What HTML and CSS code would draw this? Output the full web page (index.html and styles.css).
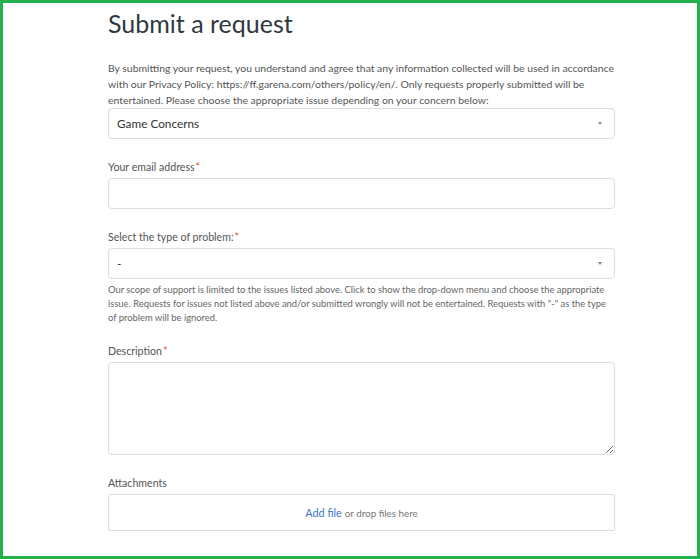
FILE: index.html
```html
<!DOCTYPE html>
<html lang="en">
<head>
    <meta charset="UTF-8">
    <meta name="viewport" content="width=device-width, initial-scale=1.0">
    <title>Submit a request</title>
    <link rel="stylesheet" href="styles.css">
</head>
<body>
    <div class="frame">
        <div class="container">
            <h1 class="page-title">Submit a request</h1>

            <p class="intro">By submitting your request, you understand and agree that any information collected will be used in accordance with our Privacy Policy: https://ff.garena.com/others/policy/en/. Only requests properly submitted will be entertained. Please choose the appropriate issue depending on your concern below:</p>

            <div class="select-field">
                <span>Game Concerns</span>
                <span class="caret"></span>
            </div>

            <form class="request-form">
                <div class="form-group">
                    <label for="email">Your email address<span class="required">*</span></label>
                    <input type="text" id="email" class="input-field">
                </div>

                <div class="form-group">
                    <label>Select the type of problem:<span class="required">*</span></label>
                    <div class="select-field">
                        <span>-</span>
                        <span class="caret"></span>
                    </div>
                    <p class="hint">Our scope of support is limited to the issues listed above. Click to show the drop-down menu and choose the appropriate issue. Requests for issues not listed above and/or submitted wrongly will not be entertained. Requests with "-" as the type of problem will be ignored.</p>
                </div>

                <div class="form-group group-tight">
                    <label for="description">Description<span class="required">*</span></label>
                    <textarea id="description" class="textarea-field"></textarea>
                </div>

                <div class="form-group">
                    <label>Attachments</label>
                    <div class="dropzone">
                        <a href="#" class="add-file">Add file</a> or drop files here
                    </div>
                </div>
            </form>
        </div>
    </div>
</body>
</html>
```

FILE: styles.css
```css
* {
    margin: 0;
    padding: 0;
    box-sizing: border-box;
}

body {
    font-family: 'Lato', 'Open Sans', sans-serif;
    background: white;
    color: #555;
}

.frame {
    height: 559px;
    border: 3px solid #22b14c;
    overflow: hidden;
    padding-left: 105px;
}

.container {
    width: 507px;
}

.page-title {
    font-size: 25px;
    font-weight: 400;
    line-height: 32px;
    color: #2f3941;
    margin-top: 4px;
}

.intro {
    font-size: 10.4px;
    line-height: 16px;
    margin-top: 21px;
    color: #555;
}

.select-field {
    height: 31px;
    border: 1px solid #ddd;
    border-radius: 4px;
    display: flex;
    align-items: center;
    justify-content: space-between;
    padding: 0 12px 0 8px;
    font-size: 11.8px;
    color: #333;
}

.caret {
    width: 0;
    height: 0;
    border-left: 2.5px solid transparent;
    border-right: 2.5px solid transparent;
    border-top: 3px solid #888;
}

.form-group {
    margin-top: 21px;
}

.group-tight {
    margin-top: 19px;
}

.form-group label {
    display: block;
    font-size: 10.6px;
    line-height: 14px;
    margin-bottom: 4px;
    color: #555;
}

.required {
    color: #e34f32;
    margin-left: 1px;
}

.input-field {
    display: block;
    width: 100%;
    height: 31px;
    border: 1px solid #ddd;
    border-radius: 4px;
    font-family: inherit;
}

.hint {
    font-size: 9.4px;
    line-height: 14px;
    margin-top: 4px;
    color: #666;
}

.textarea-field {
    display: block;
    width: 100%;
    height: 93px;
    border: 1px solid #ddd;
    border-radius: 4px;
    resize: vertical;
    font-family: inherit;
}

.dropzone {
    height: 37px;
    border: 1px solid #ddd;
    border-radius: 2px;
    display: flex;
    align-items: center;
    justify-content: center;
    gap: 3px;
    font-size: 9.8px;
    color: #777;
}

.add-file {
    color: #3b73d1;
    text-decoration: none;
    font-size: 10.8px;
}
```
